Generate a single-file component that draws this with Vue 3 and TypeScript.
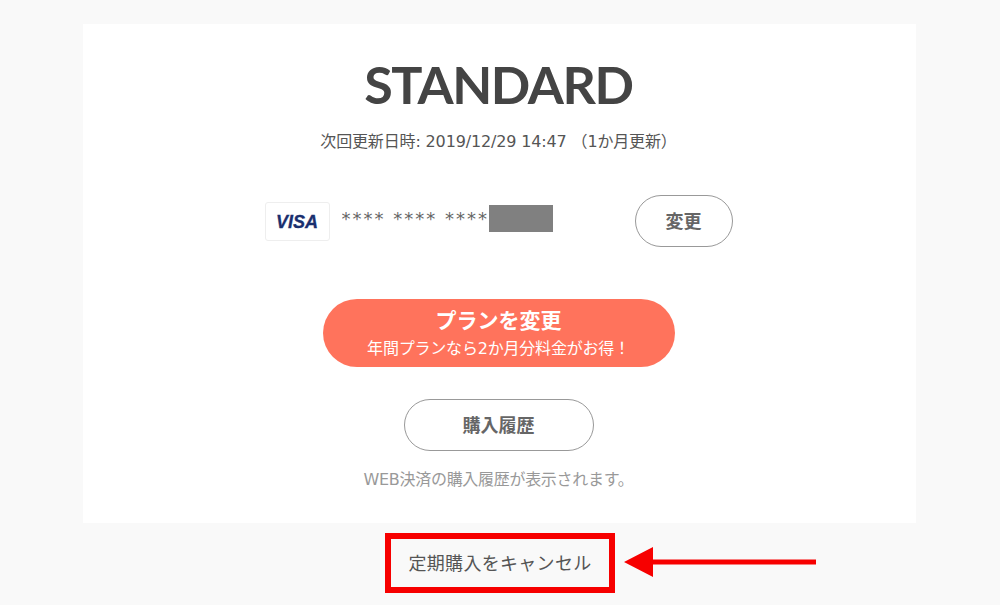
<script setup lang="ts">
const cardMask = '**** **** ****'
</script>

<template>
  <div class="page">
    <main class="card">
      <h1 class="plan">STANDARD</h1>
      <p class="next">次回更新日時: 2019/12/29 14:47 （1か月更新）</p>

      <div class="pay">
        <div class="visa">VISA</div>
        <div class="number">
          <span class="mask">{{ cardMask }}</span>
          <i class="redact"></i>
        </div>
        <button class="btn btn-small">変更</button>
      </div>

      <button class="change">
        <strong>プランを変更</strong>
        <span>年間プランなら2か月分料金がお得！</span>
      </button>

      <button class="btn btn-history">購入履歴</button>
      <p class="note">WEB決済の購入履歴が表示されます。</p>
    </main>

    <div class="cancel-wrap">
      <div class="cancel">定期購入をキャンセル</div>
      <svg class="arrow" width="194" height="32" viewBox="0 0 194 32">
        <path d="M0 16 L29 1 V13.5 H192 V18.5 H29 V31 Z" fill="#f70000" />
      </svg>
    </div>
  </div>
</template>

<style scoped>
.page {
  width: 1000px;
  height: 605px;
  padding-top: 24px;
  box-sizing: border-box;
  background: #f9f9f9;
  color: #555;
  font-family: "DejaVu Sans", "Noto Sans CJK JP", sans-serif;
  display: flex;
  flex-direction: column;
  align-items: center;
  overflow: hidden;
}

.card {
  width: 833px;
  height: 499px;
  margin-left: -1px;
  padding-right: 2px;
  box-sizing: border-box;
  background: #fff;
  display: flex;
  flex-direction: column;
  align-items: center;
}

.plan {
  margin: 29px 0 0;
  font-family: Lato, sans-serif;
  font-size: 52px;
  line-height: 62px;
  font-weight: 700;
  letter-spacing: -1.4px;
  color: #444;
}

.next {
  margin: 16px 0 0;
  font-size: 16px;
  line-height: 22px;
  letter-spacing: -0.15px;
  white-space: nowrap;
  color: #555;
}

.pay {
  margin-top: 42px;
  width: 468px;
  height: 52px;
  display: flex;
  align-items: center;
}

.visa {
  flex: none;
  width: 63px;
  height: 35px;
  padding-top: 2px;
  border: 1px solid #eee;
  border-radius: 3px;
  display: flex;
  align-items: center;
  justify-content: center;
  font-family: "Liberation Sans", sans-serif;
  font-size: 18px;
  font-weight: 700;
  font-style: italic;
  -webkit-text-stroke: 0.3px #1a2f6e;
  color: #1a2f6e;
}

.number {
  flex: none;
  margin-left: 12px;
  width: 211px;
  height: 27px;
  margin-top: -5px;
  display: flex;
  align-items: center;
  color: #666;
}

.mask {
  flex: none;
  width: 147px;
  font-size: 18px;
  letter-spacing: 2px;
  white-space: pre;
  overflow: hidden;
}

.redact {
  flex: none;
  width: 64px;
  height: 27px;
  background: #808080;
}

.btn {
  background: #fff;
  border: 1.5px solid #999;
  border-radius: 26px;
  font-family: inherit;
  font-weight: 700;
  font-size: 18px;
  color: #666;
  padding: 0 0 3px;
}

.btn-small {
  flex: none;
  margin-left: 82px;
  width: 98px;
  height: 52px;
}

.change {
  margin-top: 52px;
  width: 352px;
  height: 68px;
  border: 0;
  border-radius: 34px;
  background: #ff735c;
  color: #fff;
  font-family: inherit;
  padding: 0;
  display: flex;
  flex-direction: column;
  align-items: center;
  justify-content: center;
}

.change strong {
  font-size: 21px;
  line-height: 28px;
  font-weight: 700;
}

.change span {
  font-size: 16px;
  line-height: 22px;
  margin-top: 3px;
  letter-spacing: -0.2px;
}

.btn-history {
  margin-top: 32px;
  width: 190px;
  height: 52px;
}

.note {
  margin: 18px 0 0;
  font-size: 16px;
  line-height: 22px;
  letter-spacing: -0.3px;
  color: #999;
}

.cancel-wrap {
  position: relative;
  margin-top: 10px;
}

.cancel {
  width: 230px;
  height: 60px;
  box-sizing: border-box;
  border: 6px solid #f70000;
  padding-bottom: 3px;
  display: flex;
  align-items: center;
  justify-content: center;
  font-size: 18px;
  letter-spacing: 0.3px;
  color: #555;
}

.arrow {
  position: absolute;
  left: 239px;
  top: 13px;
}
</style>
